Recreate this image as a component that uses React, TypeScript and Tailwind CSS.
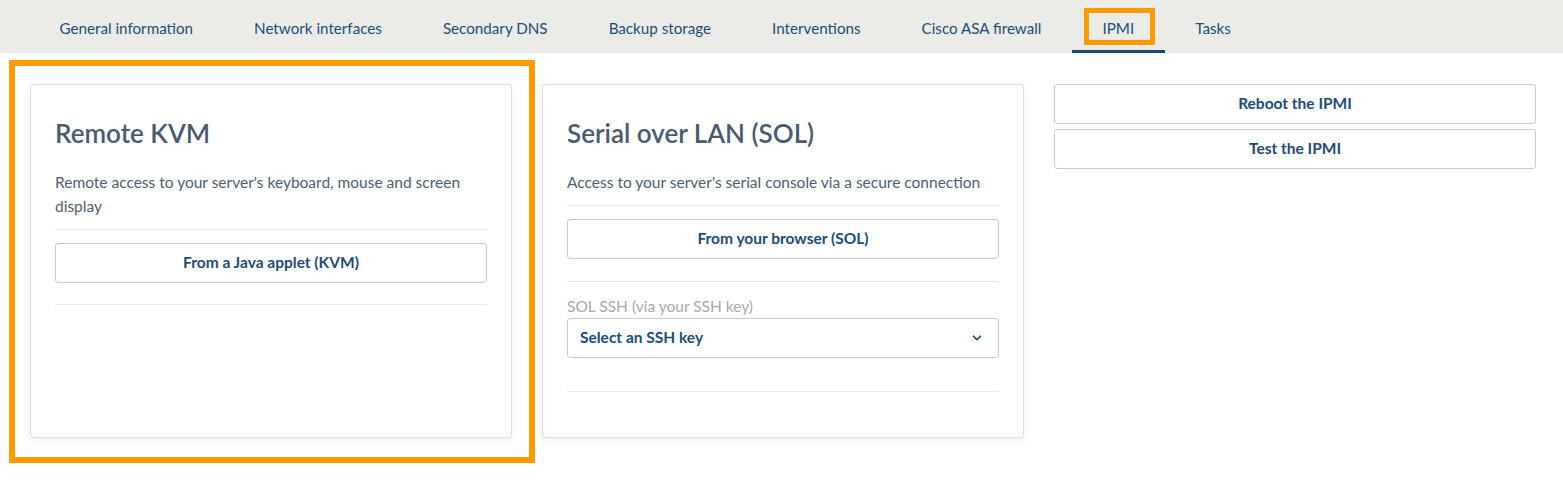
import { ChevronDown } from 'lucide-react';

const tabs = [
  'General information',
  'Network interfaces',
  'Secondary DNS',
  'Backup storage',
  'Interventions',
  'Cisco ASA firewall',
  'IPMI',
  'Tasks',
];

const font = { fontFamily: 'Lato, "Open Sans", sans-serif' };

const OutlineButton = ({ label }: { label: string }) => (
  <button className="h-10 w-full rounded-[3px] border border-[#cbcbcb] bg-white text-[15.5px] font-bold text-[#1c4c78]">
    {label}
  </button>
);

const App = () => {
  return (
    <div className="min-h-screen bg-white" style={font}>
      <nav className="flex h-[53px] bg-[#ebece8] pl-[29px]">
        {tabs.map((tab) => {
          const active = tab === 'IPMI';
          return (
            <div
              key={tab}
              className={
                'relative flex items-center border-b-[3px] px-[30.5px] pt-[7px] text-[15.2px] text-[#1c4c78] ' +
                (active ? 'border-[#154a78]' : 'border-transparent')
              }
            >
              {tab}
              {active && (
                <span className="pointer-events-none absolute left-[12px] right-[10px] top-[8px] bottom-[5px] border-[5px] border-[#ff9a00]" />
              )}
            </div>
          );
        })}
      </nav>

      <div className="grid grid-cols-3 items-start gap-[30px] pl-[30px] pr-[27px] pt-[31px]">
        <div className="relative h-[354px]">
          <span className="pointer-events-none absolute -left-[21px] -top-[24px] -right-[23px] -bottom-[25px] border-[6px] border-[#ff9a00]" />
          <div className="h-full rounded-[3px] border border-[#dedede] bg-white px-6 pt-[29px] shadow-[0_3px_8px_rgba(0,0,0,0.06)]">
            <h2 className="text-[26px] font-semibold leading-[38px] text-[#4a5b70]">Remote KVM</h2>
            <p className="mt-[18px] text-[15.5px] leading-6 text-[#4e5e72]">
              Remote access to your server's keyboard, mouse and screen display
            </p>
            <div className="mt-[11px] border-t border-[#e8e8e8] pb-[21px] pt-[13px]">
              <OutlineButton label="From a Java applet (KVM)" />
            </div>
            <div className="border-t border-[#e8e8e8]" />
          </div>
        </div>

        <div className="h-[354px] rounded-[3px] border border-[#dedede] bg-white px-6 pt-[29px] shadow-[0_3px_8px_rgba(0,0,0,0.06)]">
          <h2 className="text-[26px] font-semibold leading-[38px] text-[#4a5b70]">Serial over LAN (SOL)</h2>
          <p className="mt-[18px] text-[15.5px] leading-6 text-[#4e5e72]">
            Access to your server's serial console via a secure connection
          </p>
          <div className="mt-[11px] border-t border-[#e8e8e8] pb-[22px] pt-[13px]">
            <OutlineButton label="From your browser (SOL)" />
          </div>
          <div className="border-t border-[#e8e8e8] pb-[33px] pt-[14px]">
            <div className="text-[15.5px] leading-[20px] text-[#a9a9a9]">SOL SSH (via your SSH key)</div>
            <div className="mt-[2px] flex h-10 items-center justify-between rounded-[3px] border border-[#cbcbcb] pl-3 pr-[14px]">
              <span className="text-[15.5px] font-bold text-[#1c4c78]">Select an SSH key</span>
              <ChevronDown size={14} strokeWidth={3} className="text-[#1c4c78]" />
            </div>
          </div>
          <div className="border-t border-[#e8e8e8]" />
        </div>

        <div className="flex flex-col gap-[5px]">
          <OutlineButton label="Reboot the IPMI" />
          <OutlineButton label="Test the IPMI" />
        </div>
      </div>
    </div>
  );
};

export default App;
